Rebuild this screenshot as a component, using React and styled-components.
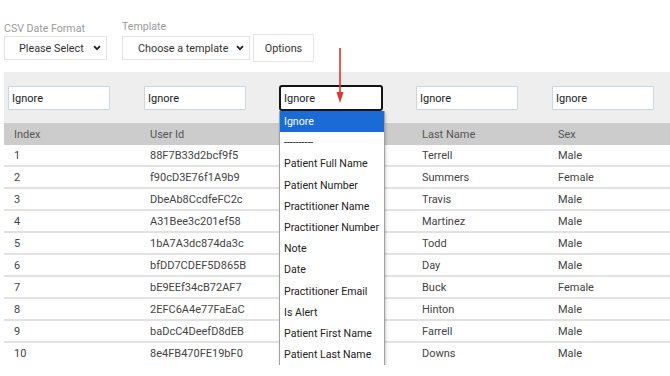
import React from 'react';
import styled, { createGlobalStyle } from 'styled-components';

const GlobalStyle = createGlobalStyle`
  body {
    margin: 0;
    background: #fff;
    font-family: Roboto, "Liberation Sans", sans-serif;
    overflow: hidden;
  }
`;

const Page = styled.div`
  position: relative;
  width: 680px;
  padding-left: 4px;
`;

const Toolbar = styled.div`
  display: flex;
  gap: 15px;
`;

const Field = styled.div`
  display: flex;
  flex-direction: column;
`;

const Label = styled.label`
  font-size: 10.6px;
  line-height: 14px;
  color: #9a9a9a;
  margin-top: ${p => p.$top}px;
  margin-bottom: ${p => 20 - p.$top}px;
`;

const Controls = styled.div`
  display: flex;
  align-items: center;
  gap: 3px;
  height: 28px;
`;

const Select = styled.div`
  box-sizing: border-box;
  display: flex;
  align-items: center;
  justify-content: space-between;
  width: ${p => p.$w}px;
  height: 24px;
  padding: 0 5px 0 ${p => p.$pad}px;
  border: 1px solid #e4e4e4;
  background: #fff;
  font-size: 10.8px;
  color: #333;
`;

const Button = styled.div`
  box-sizing: border-box;
  display: flex;
  align-items: center;
  justify-content: center;
  width: 61px;
  height: 28px;
  border: 1px solid #e4e4e4;
  font-size: 10.8px;
  color: #333;
`;

const Grid = styled.div`
  display: grid;
  grid-template-columns: repeat(5, 136px);
`;

const MapBand = styled(Grid)`
  margin-top: 10px;
  height: 51px;
  background: #eeeeee;
  padding-top: 14px;
  box-sizing: border-box;
`;

const MapCell = styled.div`
  position: relative;
  padding-left: ${p => (p.$focused ? 3 : 4)}px;
  margin-top: ${p => (p.$focused ? -1 : 0)}px;
`;

const Input = styled.div`
  box-sizing: border-box;
  width: ${p => (p.$focused ? 104 : 102)}px;
  height: ${p => (p.$focused ? 26 : 24)}px;
  display: flex;
  align-items: center;
  padding-left: 3px;
  background: #fff;
  border: ${p => (p.$focused ? '2px solid #141414' : '1px solid #c9d6de')};
  border-radius: ${p => (p.$focused ? 3 : 1)}px;
  font-size: 11px;
  color: #222;
`;

const Menu = styled.ul`
  position: absolute;
  top: 26px;
  left: 3px;
  z-index: 5;
  width: 104px;
  margin: 0;
  padding: 0;
  list-style: none;
  background: #fff;
  border: 1px solid #a0a0a0;
  border-top: none;
  box-shadow: 1px 2px 3px rgba(0, 0, 0, 0.2);
`;

const MenuItem = styled.li`
  height: 21.2px;
  line-height: 21px;
  padding-left: 4px;
  font-size: 10.6px;
  white-space: nowrap;
  color: ${p => (p.$active ? '#fff' : '#222')};
  background: ${p => (p.$active ? '#1a6bd6' : 'transparent')};
`;

const HeadRow = styled(Grid)`
  height: 22px;
  align-items: center;
  background: #cccccc;
  font-size: 11px;
  color: #555;
`;

const Row = styled(Grid)`
  height: 20px;
  align-items: center;
  font-size: 11px;
  color: #444;
  border-bottom: 2px solid ${p => (p.$last ? 'transparent' : '#e2e2e2')};
`;

const Cell = styled.div`
  padding-left: 10px;
  white-space: nowrap;
`;

const Arrow = styled.svg`
  position: absolute;
  left: 335px;
  top: 46px;
  z-index: 6;
`;

const Chevron = () => (
  <svg width="8" height="6" viewBox="0 0 8 6">
    <polyline points="1,1.2 4,4.2 7,1.2" fill="none" stroke="#222" strokeWidth="1.8" />
  </svg>
);

const options = [
  'Ignore', '----------', 'Patient Full Name', 'Patient Number', 'Practitioner Name',
  'Practitioner Number', 'Note', 'Date', 'Practitioner Email', 'Is Alert',
  'Patient First Name', 'Patient Last Name',
];

// third column sits under the open dropdown, so its values stay blank
const rows = [
  ['1', '88F7B33d2bcf9f5', '', 'Terrell', 'Male'],
  ['2', 'f90cD3E76f1A9b9', '', 'Summers', 'Female'],
  ['3', 'DbeAb8CcdfeFC2c', '', 'Travis', 'Male'],
  ['4', 'A31Bee3c201ef58', '', 'Martinez', 'Male'],
  ['5', '1bA7A3dc874da3c', '', 'Todd', 'Male'],
  ['6', 'bfDD7CDEF5D865B', '', 'Day', 'Male'],
  ['7', 'bE9EEf34cB72AF7', '', 'Buck', 'Female'],
  ['8', '2EFC6A4e77FaEaC', '', 'Hinton', 'Male'],
  ['9', 'baDcC4DeefD8dEB', '', 'Farrell', 'Male'],
  ['10', '8e4FB470FE19bF0', '', 'Downs', 'Male'],
];

const headers = ['Index', 'User Id', '', 'Last Name', 'Sex'];

export default function App() {
  return (
    <Page>
      <GlobalStyle />
      <Toolbar>
        <Field>
          <Label $top={22}>CSV Date Format</Label>
          <Controls>
            <Select $w={103} $pad={14}>
              <span>Please Select</span>
              <Chevron />
            </Select>
          </Controls>
        </Field>
        <Field>
          <Label $top={20}>Template</Label>
          <Controls>
            <Select $w={128} $pad={15}>
              <span>Choose a template</span>
              <Chevron />
            </Select>
            <Button>Options</Button>
          </Controls>
        </Field>
      </Toolbar>

      <MapBand>
        {headers.map((h, i) => (
          <MapCell key={i} $focused={i === 2}>
            <Input $focused={i === 2}>Ignore</Input>
            {i === 2 && (
              <Menu>
                {options.map((o, j) => (
                  <MenuItem key={o} $active={j === 0}>{o}</MenuItem>
                ))}
              </Menu>
            )}
          </MapCell>
        ))}
      </MapBand>

      <HeadRow>
        {headers.map((h, i) => <Cell key={i}>{h}</Cell>)}
      </HeadRow>
      {rows.map((r, i) => (
        <Row key={r[0]} $last={i === rows.length - 1}>
          {r.map((v, j) => <Cell key={j}>{v}</Cell>)}
        </Row>
      ))}

      <Arrow width="10" height="60" viewBox="0 0 10 60">
        <line x1="5" y1="2" x2="5" y2="50" stroke="#e0352b" strokeWidth="1.6" />
        <polygon points="1.5,46 8.5,46 5,57" fill="#e0352b" />
      </Arrow>
    </Page>
  );
}
